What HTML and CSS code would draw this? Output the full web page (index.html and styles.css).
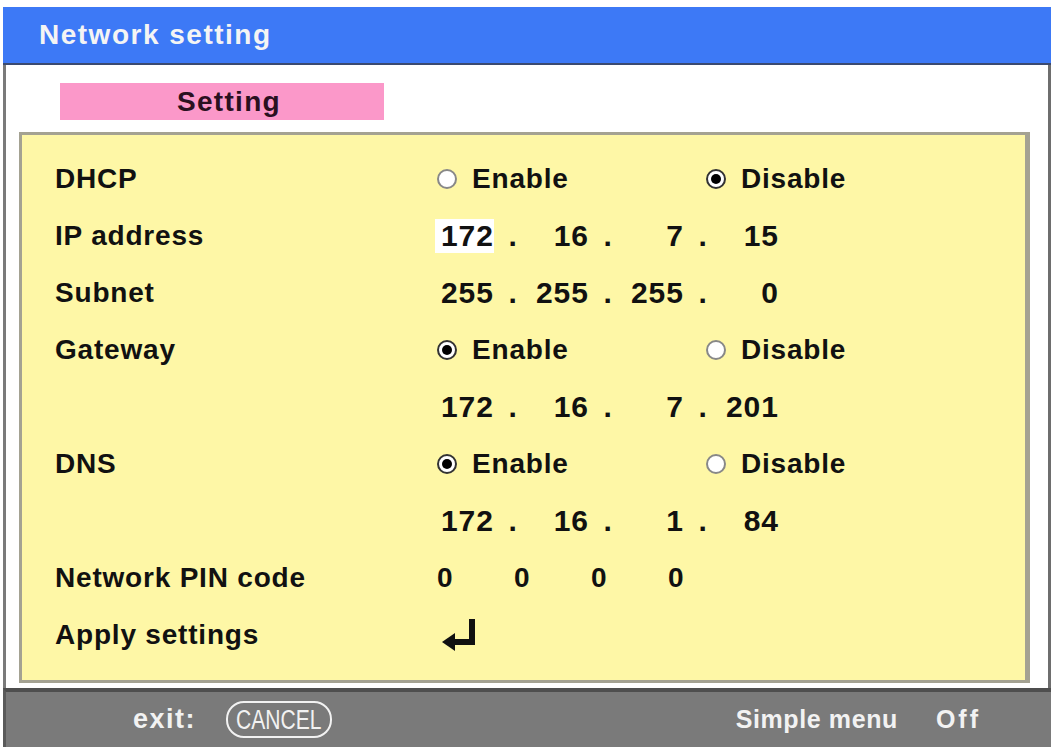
FILE: index.html
```html
<!DOCTYPE html>
<html lang="en">
<head>
    <meta charset="UTF-8">
    <title>Network setting</title>
    <link rel="stylesheet" href="styles.css">
</head>
<body>
    <div class="osd">
        <div class="osd-title">Network setting</div>

        <div class="osd-body">
            <div class="tab">Setting</div>

            <div class="panel">
                <div class="row">
                    <span class="label">DHCP</span>
                    <span class="opt"><i class="radio"></i>Enable</span>
                    <span class="opt"><i class="radio on"></i>Disable</span>
                </div>
                <div class="row">
                    <span class="label">IP address</span>
                    <span class="ip">
                        <span class="oct sel">172</span><span class="dot">.</span><span class="oct">16</span><span class="dot">.</span><span class="oct">7</span><span class="dot">.</span><span class="oct">15</span>
                    </span>
                </div>
                <div class="row">
                    <span class="label">Subnet</span>
                    <span class="ip">
                        <span class="oct">255</span><span class="dot">.</span><span class="oct">255</span><span class="dot">.</span><span class="oct">255</span><span class="dot">.</span><span class="oct">0</span>
                    </span>
                </div>
                <div class="row">
                    <span class="label">Gateway</span>
                    <span class="opt"><i class="radio on"></i>Enable</span>
                    <span class="opt"><i class="radio"></i>Disable</span>
                </div>
                <div class="row">
                    <span class="label"></span>
                    <span class="ip">
                        <span class="oct">172</span><span class="dot">.</span><span class="oct">16</span><span class="dot">.</span><span class="oct">7</span><span class="dot">.</span><span class="oct">201</span>
                    </span>
                </div>
                <div class="row">
                    <span class="label">DNS</span>
                    <span class="opt"><i class="radio on"></i>Enable</span>
                    <span class="opt"><i class="radio"></i>Disable</span>
                </div>
                <div class="row">
                    <span class="label"></span>
                    <span class="ip">
                        <span class="oct">172</span><span class="dot">.</span><span class="oct">16</span><span class="dot">.</span><span class="oct">1</span><span class="dot">.</span><span class="oct">84</span>
                    </span>
                </div>
                <div class="row">
                    <span class="label">Network PIN code</span>
                    <span class="pin">
                        <span>0</span><span>0</span><span>0</span><span>0</span>
                    </span>
                </div>
                <div class="row">
                    <span class="label">Apply settings</span>
                    <span class="enter">
                        <svg width="34" height="32" viewBox="0 0 34 32">
                            <path d="M27 0H33V26H12V20H27Z" fill="#111"/>
                            <path d="M0 23L13 14V32Z" fill="#111"/>
                        </svg>
                    </span>
                </div>
            </div>
        </div>

        <div class="osd-footer">
            <span class="exit">exit:</span>
            <span class="cancel"><span>CANCEL</span></span>
            <span class="simple">Simple menu</span>
            <span class="off">Off</span>
        </div>
    </div>
</body>
</html>
```

FILE: styles.css
```css
body {
    margin: 0;
    background: #fff;
    font-family: "Liberation Sans", Arial, sans-serif;
    font-weight: bold;
    color: #111;
}
.osd {
    width: 1048px;
    margin: 7px 0 0 3px;
}
.osd-title {
    height: 56px;
    line-height: 56px;
    padding-left: 36px;
    background-color: #3d79f6;
    border-bottom: 2px solid #3b4a70;
    color: #f4f4f4;
    font-size: 28px;
    letter-spacing: 1.5px;
}
.osd-body {
    background: #fff;
    border-left: 3px solid #7a7a7a;
    border-right: 3px solid #6e6e6e;
    padding: 18px 18px 5px 13px;
}
.tab {
    width: 310px;
    height: 37px;
    line-height: 38px;
    margin-left: 41px;
    padding-left: 14px;
    background-color: #fb98c9;
    color: #2a1020;
    text-align: center;
    font-size: 28px;
    letter-spacing: 1.3px;
}
.panel {
    margin-top: 12px;
    background-color: #fef7a6;
    border: 3px solid #a4a292;
    border-right-width: 5px;
    padding: 15px 0 17px 33px;
}
.row {
    display: grid;
    grid-template-columns: 382px 269px 1fr;
    align-items: center;
    height: 57px;
    font-size: 28px;
    letter-spacing: 0.8px;
}
.opt {
    display: flex;
    align-items: center;
}
.radio {
    width: 16px;
    height: 16px;
    margin: 0 15px 0 0;
    border: 2px solid #888;
    border-radius: 50%;
    background: #fff;
    position: relative;
}
.radio.on {
    border-color: #333;
}
.radio.on::after {
    content: "";
    position: absolute;
    left: 3px;
    top: 3px;
    width: 10px;
    height: 10px;
    border-radius: 50%;
    background: #000;
}
.ip {
    display: flex;
    grid-column: 2 / 4;
    font-size: 30px;
}
.oct {
    width: 57px;
    text-align: right;
    letter-spacing: 1px;
}
.oct.sel {
    background: #fff;
    margin-left: -2px;
    padding-left: 2px;
    line-height: 34px;
}
.dot {
    width: 38px;
    text-align: center;
}
.pin {
    display: flex;
    grid-column: 2 / 4;
}
.pin span {
    width: 77px;
}
.enter {
    display: flex;
    padding-left: 5px;
}
.osd-footer {
    display: flex;
    align-items: center;
    height: 55px;
    padding: 0 70px 0 127px;
    background-color: #7a7a7a;
    border-top: 4px solid #4e4e4e;
    border-left: 3px solid #5a5a5a;
    color: #f2f2f2;
    font-size: 25px;
    letter-spacing: 0.6px;
}
.exit {
    font-size: 27px;
    letter-spacing: 1.5px;
}
.cancel {
    display: flex;
    justify-content: center;
    margin-left: 30px;
    width: 102px;
    height: 33px;
    line-height: 34px;
    border: 2px solid #f2f2f2;
    border-radius: 18px;
    font-weight: normal;
    font-size: 27px;
    letter-spacing: 0;
}
.cancel span {
    display: inline-block;
    transform: scaleX(0.78);
}
.simple {
    margin-left: auto;
}
.off {
    margin-left: 38px;
    letter-spacing: 3px;
}
```
